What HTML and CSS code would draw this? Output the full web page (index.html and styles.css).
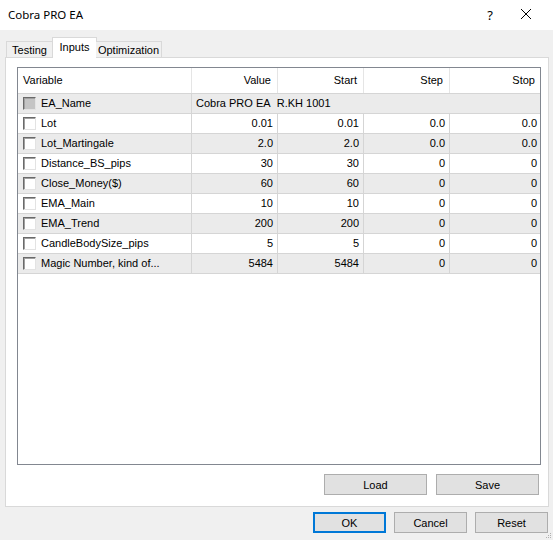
FILE: index.html
```html
<!DOCTYPE html>
<html>
<head>
<meta charset="utf-8">
<link rel="stylesheet" href="styles.css">
</head>
<body>
<div class="window">
  <div class="titlebar">
    <span class="title">Cobra PRO EA</span>
    <span class="help">?</span>
    <svg class="close" width="12" height="12" viewBox="0 0 12 12"><path d="M1 1 L11 11 M11 1 L1 11" stroke="#000" stroke-width="1" fill="none"/></svg>
  </div>
  <div class="tabs">
    <div class="tab t1">Testing</div>
    <div class="tab t2 active">Inputs</div>
    <div class="tab t3">Optimization</div>
  </div>
  <div class="panel">
    <div class="table">
      <div class="row head">
        <div class="c var">Variable</div>
        <div class="c num">Value</div>
        <div class="c num">Start</div>
        <div class="c num">Step</div>
        <div class="c num last">Stop</div>
      </div>
      <div class="row odd">
        <div class="c var"><span class="cb dis"></span>EA_Name</div>
        <div class="c span">Cobra PRO EA&nbsp; R.KH 1001</div>
      </div>
      <div class="row">
        <div class="c var"><span class="cb"></span>Lot</div>
        <div class="c num">0.01</div><div class="c num">0.01</div><div class="c num">0.0</div><div class="c num last">0.0</div>
      </div>
      <div class="row odd">
        <div class="c var"><span class="cb"></span>Lot_Martingale</div>
        <div class="c num">2.0</div><div class="c num">2.0</div><div class="c num">0.0</div><div class="c num last">0.0</div>
      </div>
      <div class="row">
        <div class="c var"><span class="cb"></span>Distance_BS_pips</div>
        <div class="c num">30</div><div class="c num">30</div><div class="c num">0</div><div class="c num last">0</div>
      </div>
      <div class="row odd">
        <div class="c var"><span class="cb"></span>Close_Money($)</div>
        <div class="c num">60</div><div class="c num">60</div><div class="c num">0</div><div class="c num last">0</div>
      </div>
      <div class="row">
        <div class="c var"><span class="cb"></span>EMA_Main</div>
        <div class="c num">10</div><div class="c num">10</div><div class="c num">0</div><div class="c num last">0</div>
      </div>
      <div class="row odd">
        <div class="c var"><span class="cb"></span>EMA_Trend</div>
        <div class="c num">200</div><div class="c num">200</div><div class="c num">0</div><div class="c num last">0</div>
      </div>
      <div class="row">
        <div class="c var"><span class="cb"></span>CandleBodySize_pips</div>
        <div class="c num">5</div><div class="c num">5</div><div class="c num">0</div><div class="c num last">0</div>
      </div>
      <div class="row odd">
        <div class="c var"><span class="cb"></span>Magic Number, kind of...</div>
        <div class="c num">5484</div><div class="c num">5484</div><div class="c num">0</div><div class="c num last">0</div>
      </div>
    </div>
    <div class="panel-buttons">
      <button class="btn wide">Load</button>
      <button class="btn wide">Save</button>
    </div>
  </div>
  <div class="footer">
    <button class="btn ok">OK</button>
    <button class="btn">Cancel</button>
    <button class="btn">Reset</button>
    <svg class="grip" width="6" height="6" viewBox="0 0 6 6"><rect x="4" y="0" width="1" height="1" fill="#b0b0b0"/><rect x="2" y="2" width="1" height="1" fill="#b0b0b0"/><rect x="4" y="2" width="1" height="1" fill="#b0b0b0"/><rect x="0" y="4" width="1" height="1" fill="#b0b0b0"/><rect x="2" y="4" width="1" height="1" fill="#b0b0b0"/><rect x="4" y="4" width="1" height="1" fill="#b0b0b0"/></svg>
  </div>
</div>
</body>
</html>
```

FILE: styles.css
```css
* { box-sizing: border-box; }
html, body { margin: 0; padding: 0; }
body {
  width: 553px;
  height: 540px;
  overflow: hidden;
  background: #f0f0f0;
  font-family: "Liberation Sans", Arial, sans-serif;
  font-size: 11px;
  color: #000;
}
.window {
  width: 553px;
  height: 540px;
  display: flex;
  flex-direction: column;
}
.titlebar {
  height: 30px;
  background: #fff;
  display: flex;
  align-items: center;
  padding-left: 8px;
}
.title {
  font-family: "Noto Sans", sans-serif;
  font-size: 11.5px;
  flex: 1;
  margin-top: -1px;
}
.help {
  font-family: "Noto Sans", sans-serif;
  font-size: 13px;
  margin-right: 27px;
  margin-top: -1px;
}
.close {
  margin-right: 21px;
  margin-top: -2px;
}
.tabs {
  margin-top: 7px;
  height: 21px;
  margin-left: 6px;
  margin-bottom: -1px;
  display: flex;
  align-items: flex-end;
  position: relative;
  z-index: 1;
}
.tab {
  height: 16px;
  margin-bottom: 1px;
  border: 1px solid #d9d9d9;
  border-bottom: none;
  background: #f0f0f0;
  display: flex;
  align-items: center;
  justify-content: center;
  padding-top: 1px;
}
.t1 { width: 47px; }
.t2 { width: 45px; margin-left: -1px; }
.t3 { width: 66px; margin-left: -1px; border-left: none; }
.tab.active {
  height: 21px;
  margin-bottom: 0;
  background: #fff;
  align-items: flex-start;
  padding-top: 3px;
}
.panel {
  margin: 0 4px 0 5px;
  height: 450px;
  border: 1px solid #d9d9d9;
  background: #fff;
  padding: 9px 7px 11px 11px;
  display: flex;
  flex-direction: column;
}
.table {
  height: 398px;
  border: 1px solid #828790;
  background: #fff;
}
.row {
  display: grid;
  grid-template-columns: 174px 86px 86px 86px 91px;
  height: 20px;
  border-bottom: 1px solid #d5d5d5;
}
.row.odd { background: #ebebeb; }
.row.head {
  height: 26px;
  background: #fff;
  border-bottom: 1px solid #d5d5d5;
}
.c {
  display: flex;
  align-items: center;
  border-right: 1px solid #d5d5d5;
  white-space: nowrap;
  overflow: hidden;
  padding: 0 4px 1px 4px;
}
.head .c { border-right-color: #e5e5e5; padding-right: 6px; }
.c.last { border-right: none; }
.c.num { justify-content: flex-end; }
.head .var { padding-left: 7px; }
.c.var { padding-left: 5px; }
.c.span { grid-column: 2 / 6; border-right: none; }
.cb {
  width: 13px;
  height: 13px;
  margin-right: 5px;
  background: #fff;
  border: 1px solid;
  border-color: #6a6a6a #e3e3e3 #e3e3e3 #6a6a6a;
  box-shadow: inset 1px 1px 0 #a0a0a0;
  flex: none;
}
.cb.dis { background: #c4c4c4; }
.panel-buttons {
  margin-top: 9px;
  display: flex;
  justify-content: flex-end;
  gap: 9px;
  padding-right: 2px;
}
.btn {
  font-family: "Liberation Sans", Arial, sans-serif;
  font-size: 11px;
  color: #000;
  width: 73px;
  height: 21px;
  background: #e1e1e1;
  border: 1px solid #adadad;
  padding: 0;
  margin: 0;
}
.btn.wide { width: 103px; }
.btn.ok { border: 2px solid #0078d7; }
.footer {
  margin-top: 5px;
  padding-right: 5px;
  display: flex;
  justify-content: flex-end;
  gap: 8px;
  position: relative;
}
.grip {
  position: absolute;
  right: 1px;
  top: 21px;
}
```
